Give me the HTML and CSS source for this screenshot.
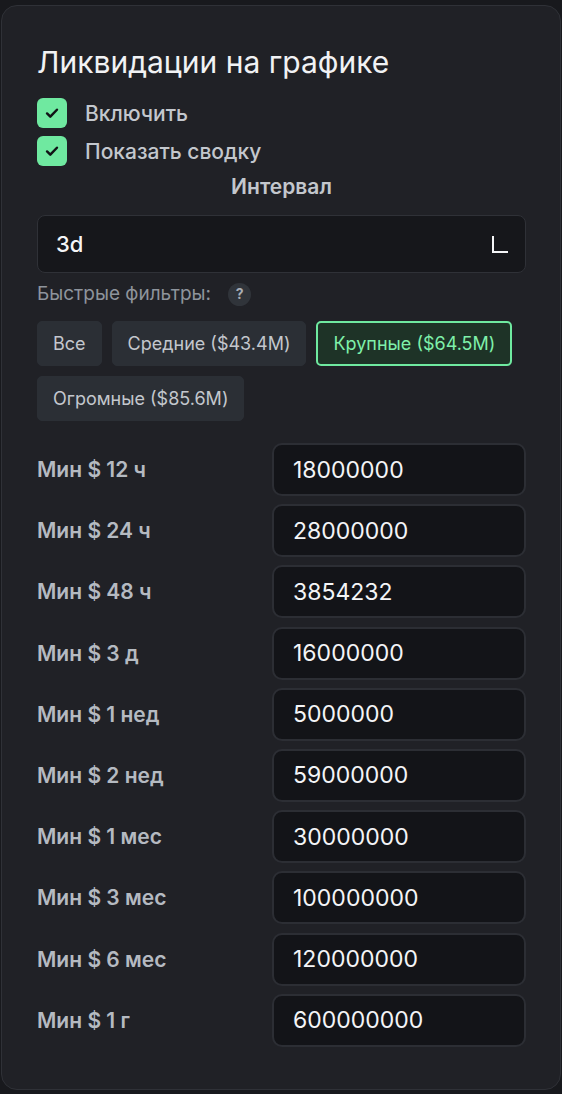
FILE: index.html
```html
<!DOCTYPE html>
<html>

<head>
  <title>Ликвидации на графике</title>
  <link rel="stylesheet" href="styles.css">
</head>

<body>
  <div class="card">
    <h1>Ликвидации на графике</h1>

    <label class="check">
      <span class="box">
        <svg width="18" height="18" viewBox="0 0 16 16"><path d="M3.6 8.4l2.9 2.9 5.9-6.2" fill="none" stroke="#111316" stroke-width="2.2" stroke-linecap="round" stroke-linejoin="round"/></svg>
      </span>
      Включить
    </label>
    <label class="check">
      <span class="box">
        <svg width="18" height="18" viewBox="0 0 16 16"><path d="M3.6 8.4l2.9 2.9 5.9-6.2" fill="none" stroke="#111316" stroke-width="2.2" stroke-linecap="round" stroke-linejoin="round"/></svg>
      </span>
      Показать сводку
    </label>

    <div class="interval-label">Интервал</div>
    <div class="select">
      <span>3d</span>
      <span class="corner"></span>
    </div>

    <div class="quick">
      Быстрые фильтры:
      <span class="help">?</span>
    </div>

    <div class="filters">
      <button>Все</button>
      <button>Средние ($43.4M)</button>
      <button class="active">Крупные ($64.5M)</button>
      <button>Огромные ($85.6M)</button>
    </div>

    <div class="rows">
      <div class="label">Мин $ 12 ч</div>
      <div class="field">18000000</div>
      <div class="label">Мин $ 24 ч</div>
      <div class="field">28000000</div>
      <div class="label">Мин $ 48 ч</div>
      <div class="field">3854232</div>
      <div class="label">Мин $ 3 д</div>
      <div class="field">16000000</div>
      <div class="label">Мин $ 1 нед</div>
      <div class="field">5000000</div>
      <div class="label">Мин $ 2 нед</div>
      <div class="field">59000000</div>
      <div class="label">Мин $ 1 мес</div>
      <div class="field">30000000</div>
      <div class="label">Мин $ 3 мес</div>
      <div class="field">100000000</div>
      <div class="label">Мин $ 6 мес</div>
      <div class="field">120000000</div>
      <div class="label">Мин $ 1 г</div>
      <div class="field">600000000</div>
    </div>
  </div>
</body>

</html>
```

FILE: styles.css
```css
* {
  margin: 0;
  padding: 0;
  box-sizing: border-box;
  font-family: 'Inter', 'Noto Sans', sans-serif;
}

body {
  background-color: #18191d;
  padding: 5px 1px 4px 1px;
}

.card {
  background-color: #202126;
  border: 1px solid #2f3137;
  border-radius: 16px;
  padding: 38px 34px 42px 35px;
}

h1 {
  color: #f1f2f4;
  font-size: 30px;
  font-weight: 400;
  line-height: 36px;
  margin-bottom: 18px;
}

.check {
  display: flex;
  align-items: center;
  gap: 18px;
  color: #c3c7cd;
  font-size: 21px;
  font-weight: 500;
  height: 30px;
  margin-bottom: 8px;
}

.box {
  width: 30px;
  height: 30px;
  border-radius: 6px;
  background-color: #6fe9a0;
  display: flex;
  align-items: center;
  justify-content: center;
}

.interval-label {
  text-align: center;
  color: #c3c7cd;
  font-size: 21px;
  font-weight: 600;
  line-height: 26px;
  margin-top: 2px;
  margin-bottom: 15px;
}

.select {
  height: 58px;
  background-color: #16171b;
  border: 1px solid #2f3137;
  border-radius: 8px;
  display: flex;
  align-items: center;
  justify-content: space-between;
  padding: 0 17px 0 18px;
  color: #f4f5f7;
  font-size: 22px;
  font-weight: 500;
}

.corner {
  width: 16px;
  height: 17px;
  border-left: 2px solid #f4f5f7;
  border-bottom: 2px solid #f4f5f7;
}

.quick {
  display: flex;
  align-items: center;
  gap: 17px;
  color: #8e949c;
  font-size: 19px;
  line-height: 24px;
  margin-top: 9px;
  height: 24px;
}

.help {
  width: 23px;
  height: 23px;
  border-radius: 50%;
  background-color: #30343a;
  color: #a9aeb5;
  font-size: 14px;
  font-weight: 700;
  display: flex;
  align-items: center;
  justify-content: center;
}

.filters {
  display: flex;
  flex-wrap: wrap;
  gap: 10px 10px;
  margin-top: 15px;
}

.filters button {
  height: 45px;
  padding: 0 15px;
  background-color: #2b2f35;
  color: #c3c7cd;
  font-size: 18px;
  border: 1px solid #2b2f35;
  border-radius: 5px;
  cursor: pointer;
}

.filters button.active {
  background-color: #1e3327;
  border: 2px solid #6fe9a0;
  color: #7ff0aa;
}

.rows {
  display: grid;
  grid-template-columns: 1fr 254px;
  row-gap: 8.2px;
  align-items: center;
  margin-top: 22px;
}

.label {
  color: #b5bac1;
  font-size: 21px;
  font-weight: 600;
}

.field {
  height: 53px;
  background-color: #131418;
  border: 2px solid #2c2e34;
  border-radius: 10px;
  color: #f4f5f7;
  font-size: 23px;
  display: flex;
  align-items: center;
  padding-left: 19px;
}
```
